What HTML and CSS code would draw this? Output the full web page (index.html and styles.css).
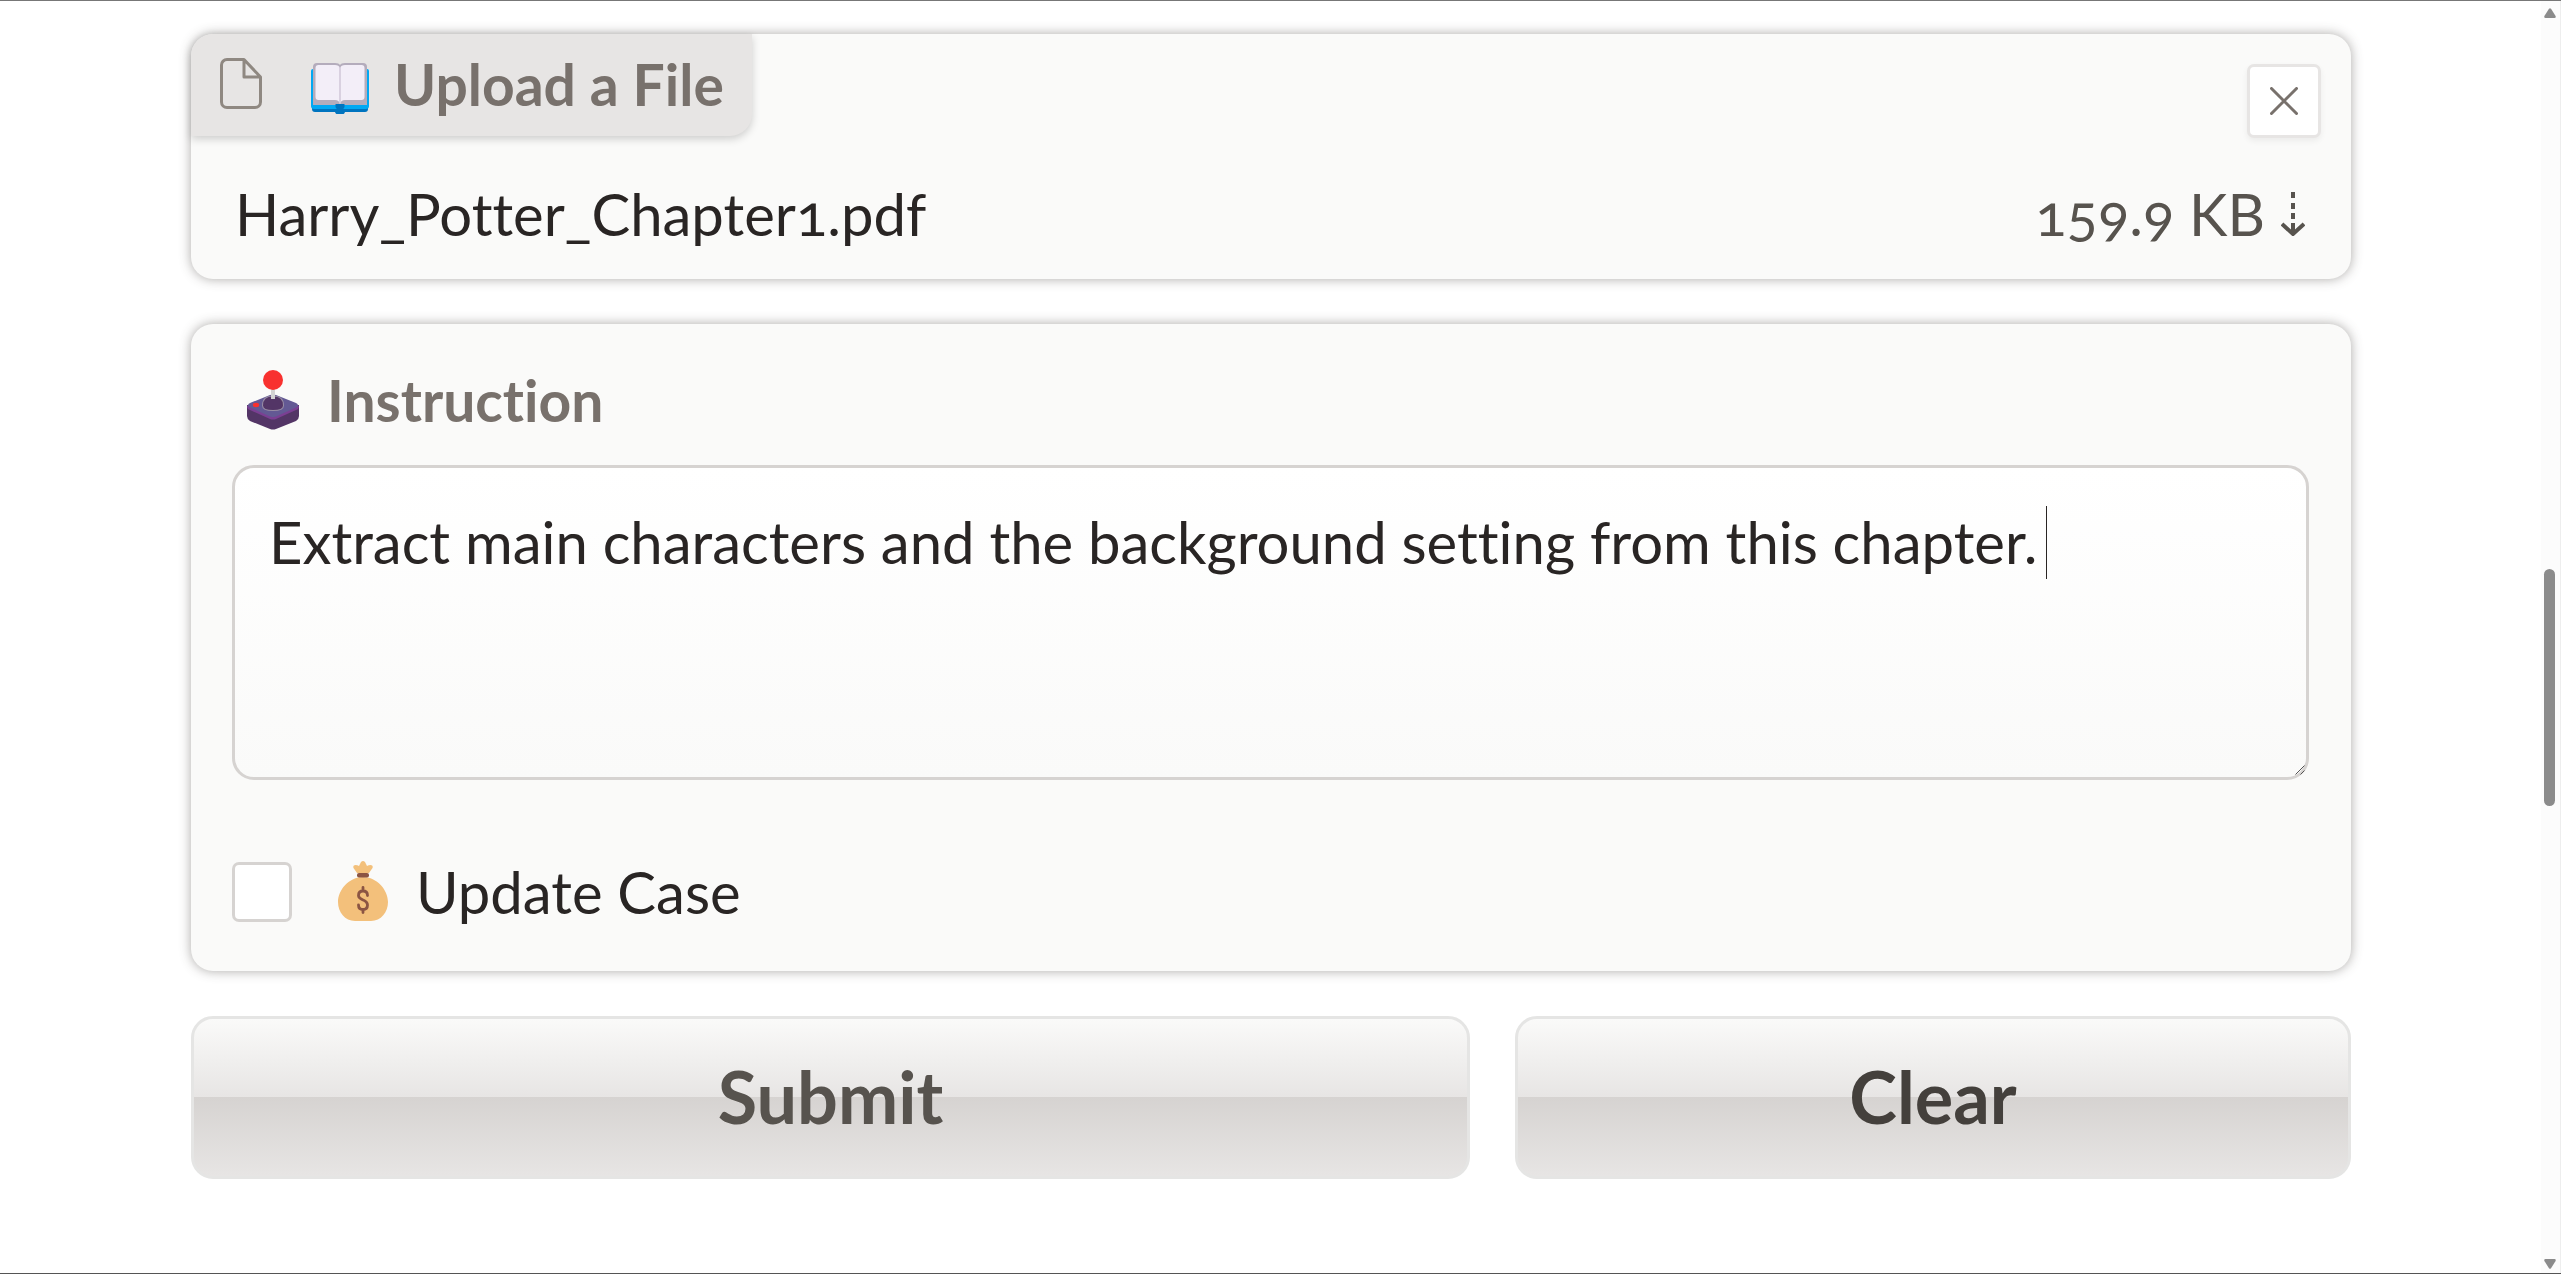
FILE: index.html
```html
<!DOCTYPE html>
<html lang="en">
<head>
<meta charset="utf-8">
<title>Upload a File</title>
<link rel="stylesheet" href="styles.css">
</head>
<body>
<main class="page">
  <section class="card file-card">
    <div class="file-head">
      <h2 class="tab">
        <svg class="tab-icon" viewBox="0 0 42 51" aria-hidden="true"><path d="M24 1.500H7A5.500 5.500 0 0 0 1.500 7v37A5.500 5.500 0 0 0 7 49.500h28a5.500 5.500 0 0 0 5.500-5.500V19zM24 1.500V19h16.500"/></svg>
        <svg class="book" viewBox="0 0 60 52" aria-hidden="true">
          <path fill="#0074bf" d="M2 40h56v7q0 3-3 3H35q-1 3-5 3t-5-3H5q-3 0-3-3z"/>
          <path fill="#02a8f3" d="M1 9q0-2 2-2h54q2 0 2 2v35q0 3-3 3H4q-3 0-3-3z"/>
          <path fill="#b4acbc" d="M3 5q0-4 4-4h18q4 0 5 2 1-2 5-2h18q4 0 4 4v38H3z"/>
          <path fill="#0074bf" d="M25.500 42h9v3q-1 3-4.500 3t-4.500-3z"/>
          <path fill="#f3eef8" d="M5.500 6q0-3 3-3H25q4 0 5 3v36q-1-4-5-4H8.500q-3 0-3-3zM30 6q1-3 5-3h16.500q3 0 3 3v29q0 3-3 3H35q-4 0-5 4z"/>
          <path fill="#cdc4d6" d="M29.300 5h1.400v37h-1.400z"/>
        </svg>
        <span>Upload a File</span>
      </h2>
      <button class="close" type="button" aria-label="Remove file"><svg viewBox="0 0 28 28" aria-hidden="true"><path d="M1.500 1.500l25 25M26.500 1.500l-25 25"/></svg></button>
    </div>
    <div class="file-row">
      <span class="file-name">Harry_Potter_Chapter1.pdf</span>
      <a class="file-size" href="#download">159.9 KB<svg class="arrow" viewBox="0 0 24 44" role="img" aria-label="Download"><path d="M12 0v6M12 11v6M12 21v6M12 31v10M1 32l11 10 11-10"/></svg></a>
    </div>
  </section>

  <form class="form">
    <section class="card prompt-card">
      <label class="title" for="instruction">
        <svg class="emoji" viewBox="0 0 52 60" aria-hidden="true">
          <path fill="#533566" d="M0 35v11q0 3 3 5l20 8q3 1 6 0l20-8q3-2 3-5V35z"/>
          <path fill="#7b3f93" d="M0 36q0 3 3 4l20 9q3 1 6 0l20-9q3-1 3-4l-26-9z"/>
          <path fill="#635994" d="M23 25q3-1 6 0l20 8q4 2 0 4.500l-20 9q-3 1-6 0L3 37.500Q-1 35 3 33z"/>
          <path fill="#998ea4" d="M15 35.500q0-10 11-10t11 10q0 5.500-11 5.500t-11-5.500z"/>
          <path fill="#533566" d="M16 35.500q0-9 10-9t10 9q0 4.500-10 4.500t-10-4.500z"/>
          <path fill="#d3d3d3" d="M24 19h4v10h-4z"/>
          <circle cx="26" cy="10" r="10" fill="#f8312f"/>
          <ellipse cx="9" cy="35" rx="3.200" ry="2.200" fill="#f8312f"/>
        </svg>
        <span>Instruction</span>
      </label>
      <div class="field">
        <textarea id="instruction" class="input" spellcheck="false">Extract main characters and the background setting from this chapter.</textarea>
        <span class="caret"></span>
        <svg class="grip" viewBox="0 0 12 12" aria-hidden="true"><path d="M1.500 10.500l9-9M6.500 10.500l4-4"/></svg>
      </div>
      <label class="check">
        <input class="box" type="checkbox">
        <svg class="emoji bag" viewBox="0 0 50 60" aria-hidden="true">
          <path fill="#f3c07b" d="M19 12l-3.500-5q-1-3 2-3 2 0 3.500 1l2-4q2-2 4 0l2 4q1.500-1 3.500-1 3 0 2 3L31 12zM25 16c14 0 25 13 25 25 0 10-7 19-17 19H17C7 60 0 51 0 41c0-12 11-25 25-25z"/>
          <rect x="19" y="12" width="12" height="4.500" rx="2" fill="#8c5543"/>
          <path fill="none" stroke="#8c5543" stroke-width="2.800" stroke-linecap="round" d="M25 26.500v3m0 19v3M29.500 34.500q0-4.500-4.500-4.500t-4.500 4.500q0 2.500 4 4.200 5 2 5 5.300 0 4.500-4.500 4.500t-4.500-4.500"/>
        </svg>
        <span>Update Case</span>
      </label>
    </section>
    <div class="actions">
      <button class="btn submit" type="submit">Submit</button>
      <button class="btn clear" type="reset">Clear</button>
    </div>
  </form>
</main>
<div class="scrollbar" aria-hidden="true">
  <svg viewBox="0 0 12 10"><path d="M5 .7q1-1 2 0l4.600 7.300q.6 2-1.100 2h-9q-1.700 0-1.100-2z"/></svg>
  <div class="thumb"></div>
  <svg viewBox="0 0 12 10"><path d="M5 9.300q1 1 2 0L11.600 2q.6-2-1.100-2h-9Q-.2 0 .4 2z"/></svg>
</div>
</body>
</html>
```
FILE: styles.css
```css
* { box-sizing: border-box; }

body {
  margin: 0;
  min-height: 100vh;
  display: grid;
  grid-template-columns: 1fr 20px;
  border-top: 1px solid #777;
  border-bottom: 1px solid #555;
  background: #fff;
  color: #292524;
  font: 400 58px/72px Lato, "Open Sans", sans-serif;
  font-variant-ligatures: none;
  font-variant-numeric: oldstyle-nums;
}

.page { padding: 33px 190px 0 191px; }

.card {
  border-radius: 22px;
  background: #fafaf9;
  box-shadow: 0 0 12px rgba(68, 64, 60, .45);
}

.file-card { min-height: 245px; margin-bottom: 45px; }

.file-head {
  display: flex;
  justify-content: space-between;
  align-items: flex-start;
}

.tab {
  display: flex;
  align-items: center;
  height: 102px;
  margin: 0;
  padding: 0 28px 3px 29px;
  border-radius: 22px 0 22px 0;
  background: #e7e5e4;
  box-shadow: 0 3px 9px rgba(0, 0, 0, .18);
  color: #78716c;
  font-size: 57px;
  font-weight: 700;
}

.tab-icon {
  width: 42px;
  height: 51px;
  fill: none;
  stroke: #8f8881;
  stroke-width: 3;
  stroke-linejoin: round;
}

.book { width: 60px; height: 52px; margin: 8px 24px 0 48px; }

.close {
  display: grid;
  place-items: center;
  width: 74px;
  height: 74px;
  margin: 30px 30px 0 0;
  padding: 0;
  border: 3px solid #e7e5e4;
  border-radius: 7px;
  background: #fff;
  box-shadow: 0 3px 6px rgba(0, 0, 0, .06);
}

.close svg {
  width: 28px;
  height: 28px;
  fill: none;
  stroke: #78716c;
  stroke-width: 3;
  stroke-linecap: round;
}

.file-row {
  display: flex;
  justify-content: space-between;
  padding: 40px 46px 0 44px;
}

.file-size { color: #57534e; text-decoration: none; }

.arrow {
  width: 24px;
  height: 44px;
  margin-left: 16px;
  fill: none;
  stroke: #57534e;
  stroke-width: 4;
}

.prompt-card { min-height: 647px; padding: 40px 42px 0 41px; }

.title {
  display: flex;
  align-items: center;
  gap: 28px;
  padding-left: 15px;
  color: #78716c;
  font-size: 57px;
  font-weight: 700;
}

.emoji { width: 52px; height: 60px; }

.field { position: relative; margin-top: 29px; }

.input {
  display: block;
  width: 100%;
  height: 315px;
  padding: 38px 34px;
  border: 3px solid #d6d3d1;
  border-radius: 22px;
  outline: 0;
  background: linear-gradient(#fff, #fafaf9);
  color: inherit;
  font: inherit;
  font-variant-ligatures: none;
}

.input::-webkit-resizer { background: none; }

.caret {
  position: absolute;
  top: 41px;
  left: 1814px;
  width: 1px;
  height: 73px;
  background: #292524;
}

.grip {
  position: absolute;
  right: 3px;
  bottom: 4px;
  width: 12px;
  height: 12px;
  fill: none;
  stroke: #555;
  stroke-width: 1;
  pointer-events: none;
}

.check {
  display: flex;
  align-items: center;
  margin-top: 76px;
}

.box {
  appearance: none;
  width: 60px;
  height: 60px;
  margin: 0 46px 0 0;
  border: 3px solid #d6d3d1;
  border-radius: 7px;
  background: #fff;
}

.bag { width: 50px; margin: 0 28px 3px 0; }

.actions {
  display: grid;
  grid-template-columns: 1279fr 836fr;
  gap: 45px;
  margin-top: 45px;
}

.btn {
  height: 163px;
  padding: 0 0 3px;
  border: 3px solid #e5e5e4;
  border-radius: 22px;
  background: linear-gradient(#fafaf9, #e7e5e4 50%, #d6d3d1 50%, #e7e5e4);
  font: 700 72px/80px Lato, "Open Sans", sans-serif;
}

.submit { color: #57534e; }

.clear { color: #44403c; }

.scrollbar {
  display: flex;
  flex-direction: column;
  align-items: center;
  justify-content: space-between;
  padding: 7px 2px 4px 0;
  border-right: 1px solid #eee;
  background: #fcfcfc;
}

.scrollbar svg { width: 12px; height: 10px; fill: #8b8b8b; }

.thumb {
  width: 11px;
  height: 237px;
  margin-top: 98px;
  border-radius: 6px;
  background: #8b8b8b;
}
```
